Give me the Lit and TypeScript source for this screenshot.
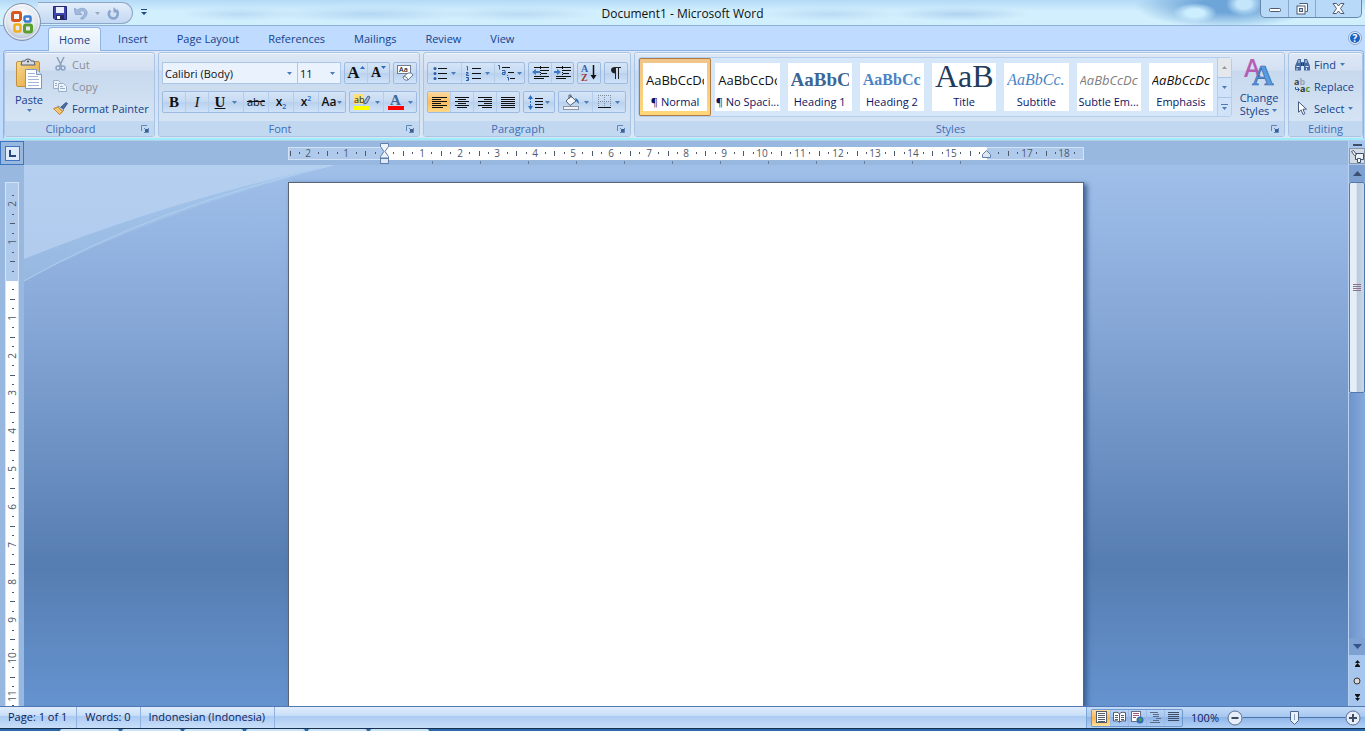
import { LitElement, html, svg, css, TemplateResult, SVGTemplateResult } from "lit";
import { customElement, property } from "lit/decorators.js";
import { classMap } from "lit/directives/class-map.js";

const icon = (w: number, h: number, body: SVGTemplateResult) =>
  html`<svg class="ic" width=${w} height=${h} viewBox="0 0 ${w} ${h}" aria-hidden="true">${body}</svg>`;

const caret = html`<svg class="ic" width="5" height="3" viewBox="0 0 5 3" aria-hidden="true"><path d="M0 0h5L2.5 3z" fill="#4a7cb8"/></svg>`;

const lines = (rows: number[][], color = "#111") =>
  svg`${rows.map(([x, y, w]) => svg`<rect x=${x} y=${y} width=${w} height="1" fill=${color}/>`)}`;

const launcherIcon = icon(8, 8, svg`<path d="M.5 6V.5H6" fill="none" stroke="#5f86b8"/><path d="M7.500 3v4.500H3" fill="none" stroke="#5f86b8"/><path d="M3 3l3 3" stroke="#5f86b8"/><rect x="4" y="4" width="3" height="3" fill="#3d5f90"/>`);

const alignRows = (offsets: number[], widths: number[]) =>
  icon(15, 13, lines(widths.map((w, i) => [offsets[i], 1 + i * 2, w])));

const icons = {
  save: icon(14, 14, svg`<path d="M.5 .5h13v13H2L.5 12z" fill="#3f45b0" stroke="#23256e"/><rect x="3" y="1" width="8" height="6" fill="#e9f0fb"/><rect x="3" y="9" width="8" height="5" fill="#26295c"/><rect x="4" y="10" width="3" height="3" fill="#fff"/>`),
  undo: icon(14, 13, svg`<path d="M0 1l1.500 6.500H8L5.500 5C8 3 10.500 3.500 10.500 6c0 2.500-2 4-4 5l1.500 1.500c3-1.500 5.500-4 5-7.500C12.500 1 7 0 3.500 3z" fill="#a3bbdc" stroke="#7f9cc6" stroke-width=".7"/>`),
  redo: icon(13, 13, svg`<path d="M3.500 3.500C0 7 2.500 11.500 6.500 11.500S12 6 9.500 3" fill="none" stroke="#8ba6cc" stroke-width="2.500"/><path d="M6.500 0v5.500H12z" fill="#8ba6cc"/>`),
  more: icon(6, 7, svg`<path d="M0 0h6v1H0zM0 3h6L3 6z" fill="#1f4a8c"/>`),
  paste: icon(28, 32, svg`<defs><linearGradient id="b" x1="0" x2="1" y2="1"><stop stop-color="#f9d98c"/><stop offset="1" stop-color="#e0a33c"/></linearGradient></defs><rect x="1.500" y="3.500" width="23" height="25" rx="1.500" fill="url(#b)" stroke="#c2913d"/><path d="M7 3h3q0-2 3-2t3 2h3l1 4H6z" fill="#d5d9e0" stroke="#555f70"/><circle cx="13" cy="3.500" r="1" fill="#444"/><path d="M10.500 11.500h11l5 5v14h-16z" fill="#fff" stroke="#7d97bd"/><path d="M21.500 11.500v5h5" fill="#d5e2f4" stroke="#7d97bd"/><path d="M13 15.500h7M13 18.500h10M13 21.500h11M13 24.500h11M13 27.500h11" stroke="#9fb6d6"/>`),
  cut: icon(11, 14, svg`<path d="M2 0l4.500 9M9 0L4.500 9" stroke="#8ea0b8" stroke-width="1.500"/><circle cx="3" cy="11" r="2" fill="none" stroke="#8aa3c5" stroke-width="1.500"/><circle cx="8" cy="11" r="2" fill="none" stroke="#8aa3c5" stroke-width="1.500"/>`),
  copy: icon(14, 12, svg`<path d="M.5 .5h5l2 2v6h-7z" fill="#eef3fa" stroke="#9aaeca"/><path d="M5.500 3.500h5l3 3v5h-8z" fill="#eef3fa" stroke="#9aaeca"/><path d="M2 3.500h2M2 5.500h2M7 6.500h3M7 8.500h5" stroke="#9aaeca"/>`),
  painter: icon(15, 13, svg`<path d="M8 5l5-4.500 1.500 1L10.500 7z" fill="#4c6da5" stroke="#2d477a" stroke-width=".8"/><path d="M5.500 4l5.500 4-1.500 1.500L4.500 5.500z" fill="#d8dde6" stroke="#66758e" stroke-width=".8"/><path d="M4.500 5L10 9.500 6.500 12.500 0.500 6.500z" fill="#f1b44a" stroke="#b9791e" stroke-width=".8"/><path d="M2.500 7l4 4M4 6l4 4" stroke="#fff0c0" stroke-width=".8"/>`),
  growTip: icon(5, 3, svg`<path d="M0 3h5L2.500 0z" fill="#2c6cc0"/>`),
  shrinkTip: icon(5, 3, svg`<path d="M0 0h5L2.500 3z" fill="#2c6cc0"/>`),
  clear: icon(17, 17, svg`<rect x=".5" y=".5" width="13" height="8" fill="#fff" stroke="#6d7c92"/><text x="2" y="7" font-size="7" font-weight="600" font-family="Open Sans, sans-serif" fill="#222">Aa</text><path d="M6 12l5-4q4-1 5 2l-5 5q-4 1-5-3z" fill="#f6f8fb" stroke="#68788f"/><path d="M6 12q1-1 3 0t2 3" fill="none" stroke="#68788f"/>`),
  highlight: icon(17, 17, svg`<rect x="0" y="0" width="10" height="10" fill="#ffdf7a"/><text x="0" y="9" font-size="9" font-family="Open Sans, sans-serif" fill="#222">ab</text><path d="M10 8l4-6 2 1-3 6-3 1z" fill="#9db4d4" stroke="#45597a" stroke-width=".9"/><rect x="0" y="12" width="16" height="4" fill="#ff0"/>`),
  fontColor: icon(16, 17, svg`<text x="2" y="11" font-size="15" font-weight="700" font-family="Liberation Serif, serif" fill="#3f6798">A</text><rect x="0" y="12" width="16" height="4" fill="#f00"/>`),
  bullets: icon(14, 14, svg`<circle cx="2" cy="2.500" r="1.500" fill="#2c5ea8"/><circle cx="2" cy="7.500" r="1.500" fill="#2c5ea8"/><circle cx="2" cy="12.500" r="1.500" fill="#2c5ea8"/>${lines([[5, 2, 9], [5, 7, 9], [5, 12, 9]])}`),
  numbering: icon(15, 15, svg`<path d="M.5 .500h1v4M0 6.500h2v1.500H.5v1.500H3M0 11.500h2.500v3H0M1 13h1.500" fill="none" stroke="#2c5ea8"/>${lines([[6, 2, 9], [6, 7, 9], [6, 12, 9]])}`),
  multilevel: icon(17, 16, svg`<path d="M0 .500h1.500v4M4 5.500h3v4H4.500V7.500h3M9.500 10v1M9 12.500h1.500v3" fill="none" stroke="#2c5ea8"/>${lines([[4, 2, 8], [10, 7, 6], [12, 13, 5]])}`),
  outdent: icon(17, 14, svg`${lines([[2, 1, 15], [9, 4, 8], [9, 7, 6], [2, 10, 15], [2, 12, 10]])}<path d="M0 6l4-3v2h4v2H4v2z" fill="#3c78c4"/><path d="M8.500 0v14" stroke="#111" stroke-dasharray="1 1"/>`),
  indent: icon(17, 14, svg`${lines([[2, 1, 15], [9, 4, 8], [9, 7, 6], [2, 10, 15], [2, 12, 10]])}<path d="M7 6L3 3v2H0v2h3v2z" fill="#3c78c4"/><path d="M8.500 0v14" stroke="#111" stroke-dasharray="1 1"/>`),
  sort: icon(16, 18, svg`<text x="0" y="8" font-size="10" font-weight="700" font-family="Liberation Serif, serif" fill="#2f66ad">A</text><text x="0" y="17" font-size="10" font-weight="700" font-family="Liberation Serif, serif" fill="#9c3b32">Z</text><path d="M12.500 1v12" stroke="#111" stroke-width="1.500"/><path d="M9.500 11h6l-3 4.500z" fill="#111"/>`),
  pilcrow: icon(11, 14, svg`<path d="M10 1H4Q0 1 0 4t4 3.500V13h1V2h2v11h1V2h2z" fill="#222"/>`),
  left: alignRows([0, 0, 0, 0, 0, 0], [15, 9, 15, 9, 15, 11]),
  center: alignRows([0, 3, 0, 3, 0, 2], [14, 8, 14, 8, 14, 10]),
  right: alignRows([0, 6, 0, 6, 0, 4], [14, 8, 14, 8, 14, 10]),
  justify: alignRows([0, 0, 0, 0, 0, 0], [14, 14, 14, 14, 14, 14]),
  spacing: icon(15, 15, svg`<path d="M0 4l2.500-4L5 4zM0 11l2.500 4L5 11z" fill="#2f6fc0"/><path d="M2.500 3v9" stroke="#2f6fc0" stroke-dasharray="2 1"/>${lines([[7, 3, 8], [7, 6, 8], [7, 9, 8], [7, 12, 8]])}`),
  shading: icon(17, 17, svg`<path d="M3 7l5-5 5 5-6 4.500z" fill="#f4f7fb" stroke="#55647a"/><path d="M6 5V1h2v3" fill="none" stroke="#55647a"/><path d="M12 4q4 1 4 6l-3-3z" fill="#3971b8"/><rect x=".5" y="12.500" width="15" height="3" fill="#f3f4f6" stroke="#8b97a8"/>`),
  borders: icon(13, 14, svg`<path d="M0 .500h13M0 6.500h13M.5 0v12M6.500 0v12M12.500 0v12" stroke="#7c8ba0" stroke-dasharray="1 1" fill="none"/><path d="M0 12.500h13" stroke="#111"/>`),
  change: icon(30, 30, svg`<text x="0" y="20" font-size="25" font-weight="600" font-family="Open Sans, sans-serif" fill="#b45fb4">A</text><text x="8" y="28" font-size="30" font-weight="700" font-family="Liberation Serif, serif" fill="#5b9be0" stroke="#2f65a8" stroke-width=".7">A</text>`),
  find: icon(15, 13, svg`<path d="M3 1h3v3h3V1h3l3 7v4.500H9V8H6v4.500H0V8z" fill="#47699f"/><path d="M4 2v3M11 2v3M1.500 8.500h3M10.500 8.500h3M2 10v2M11.500 10v2" stroke="#d5e4f7"/><path d="M6.500 5v3M8.500 5v3" stroke="#1e3a6c"/>`),
  replace: icon(16, 18, svg`<text x="0" y="8" font-size="9" font-weight="700" font-family="Open Sans, sans-serif" fill="#444">a<tspan fill="#9aa5b5">b</tspan></text><text x="6" y="15" font-size="9" font-weight="700" font-family="Open Sans, sans-serif" fill="#333">a<tspan fill="#4f9a2e">c</tspan></text><path d="M1.500 10v2.500H5M3.500 10.500l2 2-2 2" fill="none" stroke="#2c5ea8"/>`),
  select: icon(9, 14, svg`<path d="M.5 .8v10.500l2.500-2.500L5 13.500l1.800-.8L5 8.200h3.500z" fill="#fff" stroke="#43597c"/>`),
  help: icon(14, 14, svg`<circle cx="7" cy="7" r="6.500" fill="#e4effc" stroke="#8aa4c6"/><circle cx="7" cy="7" r="5" fill="#1c62c4"/><text x="4.500" y="11" font-size="10" font-weight="700" font-family="Open Sans, sans-serif" fill="#fff">?</text>`),
  print: icon(13, 13, svg`<rect x="1.500" y=".5" width="10" height="11" fill="#fff" stroke="#555d6b"/>${lines([[3, 2, 7], [3, 4, 7], [3, 6, 7], [3, 8, 7], [3, 10, 7]], "#555d6b")}`),
  reading: icon(13, 13, svg`<path d="M.5 1.500q4-1 6 1 2-2 6-1v8.500q-4-1-6 1-2-2-6-1zM6.500 2.500v9" fill="#fff" stroke="#555d6b"/>${lines([[2, 4, 3], [2, 6, 3], [2, 8, 3], [8, 4, 3], [8, 6, 3], [8, 8, 3]], "#555d6b")}`),
  web: icon(13, 13, svg`<rect x=".5" y=".5" width="9" height="10" fill="#fff" stroke="#666f80"/>${lines([[2, 2, 6], [2, 4, 6], [2, 6, 3]], "#a0567c")}<circle cx="9" cy="9" r="3.500" fill="#2f6db8"/><path d="M7 8l3-1 1 2-2 2z" fill="#4ea047"/>`),
  outline: icon(12, 13, lines([[0, 1, 8], [3, 3, 6], [3, 5, 6], [6, 7, 5], [3, 9, 6], [0, 11, 10]], "#5b6c86")),
  draft: icon(12, 13, lines([[0, 1, 11], [0, 3, 11], [0, 5, 11], [0, 7, 11], [0, 9, 11]], "#3e4d66")),
  minus: icon(16, 16, svg`<circle cx="8" cy="8" r="7" fill="#e6eefa" stroke="#5b6f8e"/><path d="M4.500 8h7" stroke="#3d4c63" stroke-width="2"/>`),
  plus: icon(16, 16, svg`<circle cx="8" cy="8" r="7" fill="#e6eefa" stroke="#5b6f8e"/><path d="M4 8h8M8 4v8" stroke="#3d4c63" stroke-width="2"/>`),
  up: icon(9, 5, svg`<path d="M0 5L4.500 0 9 5z" fill="#3c4f70"/>`),
  down: icon(9, 5, svg`<path d="M0 0h9L4.500 5z" fill="#34548c"/>`),
  pageUp: icon(7, 7, svg`<path d="M1 3l2.500-3L6 3zM1 6l2.500-3L6 6zM1 6h5v1H1z" fill="#111"/>`),
  pageDown: icon(7, 7, svg`<path d="M1 4l2.500 3L6 4zM1 1l2.500 3L6 1zM1 0h5v1H1z" fill="#111"/>`),
  browse: icon(8, 8, svg`<circle cx="4" cy="4" r="3" fill="#ddd8d4" stroke="#333"/>`),
  ruler: icon(13, 13, svg`<path d="M4.500 3.500h8v6h-8z" fill="#eef2f6" stroke="#3d536f"/><path d="M.5 1.500l2-1 3 4-2 1zM6.500 8.500h3v4h-3z" fill="#fff" stroke="#3d536f"/>`),
  min: icon(12, 6, svg`<rect x=".5" y="1.500" width="11" height="3" rx="1" fill="#fff" stroke="#4e5b70"/>`),
  restore: icon(12, 12, svg`<path d="M3.500 .5h8v8h-2" fill="#fff" stroke="#4e5b70"/><rect x="1" y="3" width="8" height="8" fill="#fff" stroke="#4e5b70"/><rect x="3.500" y="5.500" width="3" height="3" fill="#b9d5f2" stroke="#4e5b70"/>`),
  close: icon(13, 11, svg`<path d="M1 .5h3.500l2 2.500 2-2.500H12L8.500 5.500 12 10.500H8.500l-2-2.500-2 2.500H1l3.500-5z" fill="#fff" stroke="#4e5b70"/>`),
  office: icon(40, 40, svg`<defs><radialGradient id="o" cx=".5" cy=".35" r=".7"><stop stop-color="#fff"/><stop offset=".6" stop-color="#e0e6ef"/><stop offset="1" stop-color="#a4b2c8"/></radialGradient></defs><circle cx="20" cy="20" r="18.500" fill="url(#o)" stroke="#8293ad"/><circle cx="20" cy="20" r="17" fill="none" stroke="#fff" opacity=".8"/><g fill="none" stroke-width="3"><rect x="10.500" y="10.500" width="8" height="8" rx="1.500" stroke="#d9571b"/><rect x="22.500" y="14.500" width="6" height="5" rx="1" stroke="#3a7bd0" stroke-width="2.500"/><rect x="12.500" y="22.500" width="6" height="7" rx="1" stroke="#f2ad1e" stroke-width="2.500"/><rect x="22.500" y="23" width="7" height="7" rx="1.500" stroke="#5a9e2e"/></g><path d="M18 20h4M20 18v4" stroke="#e8edf4" stroke-width="2"/>`),
};

interface Item { label: string; art: TemplateResult; cls?: string; drop?: boolean; on?: boolean; }

const face = css`
  * { box-sizing: border-box; }
  button { font: inherit; color: inherit; background: none; border: 0; padding: 0; margin: 0; display: flex; align-items: center; justify-content: center; white-space: nowrap; }
  .ic { display: block; flex: none; }
`;

@customElement("ribbon-group")
class RibbonGroup extends LitElement {
  @property() name = "";
  @property({ type: Boolean }) launcher = false;
  static styles = [face, css`
    :host { display: flex; flex-direction: column; border: 1px solid #a9c4e4; border-radius: 3px; overflow: hidden; background: linear-gradient(#dee8f5 0, #d4e1f2 17px, #c8d9ee 18px, #d5e4f4 68px); box-shadow: inset 0 1px #edf4fb; }
    .body { flex: 1; padding: 0 2px 0 3px; }
    .foot { display: flex; height: 15px; align-items: center; background: #c2d8f1; color: #3e6db5; }
    .title { flex: 1; text-align: center; line-height: 15px; }
    .launch { width: 18px; height: 14px; }
  `];
  render() {
    return html`<div class="body"><slot></slot></div>
      <div class="foot"><span class="title">${this.name}</span>${this.launcher
        ? html`<button class="launch" aria-label="${this.name} options">${launcherIcon}</button>` : ""}</div>`;
  }
}

/* Pixels per centimetre at 96 dpi. */
const PITCH = 37.8;

@customElement("cm-ruler")
class CmRuler extends LitElement {
  @property({ type: Boolean, reflect: true }) vertical = false;
  static styles = css`
    :host { display: block; overflow: hidden; font-family: "Open Sans", sans-serif; font-size: 10px; }
    svg { display: block; }
    text { fill: #4d5a6e; text-anchor: middle; }
  `;
  render() {
    const v = this.vertical;
    const zero = v ? 98 : 96;
    const marks: SVGTemplateResult[] = [];
    const from = v ? -9 : -10;
    const to = v ? 110 : 73;
    for (let q = from; q <= to; q++) {
      const p = Math.round(zero + (q * PITCH) / 4);
      if (q === 0 || (!v && q === 64)) continue;
      if (q % 4 === 0) {
        const n = Math.abs(q / 4);
        marks.push(v
          ? svg`<text transform="translate(11 ${p}) rotate(-90)">${n}</text>`
          : svg`<text x=${p} y="10">${n}</text>`);
      } else {
        const len = q % 2 === 0 ? 5 : 2;
        marks.push(v
          ? svg`<rect x=${Math.round(7.5 - len / 2)} y=${p} width=${len} height="1" fill="#4d5a6e"/>`
          : svg`<rect x=${p} y=${Math.round(6 - len / 2)} width="1" height=${len} fill="#4d5a6e"/>`);
      }
    }
    return v
      ? html`<svg width="14" height="1123"><rect x=".5" y=".5" width="13" height="1122" fill="#fff" stroke="#d3e3f7"/><rect x="1" y="1" width="12" height="98" fill="#b0caec"/>${marks}</svg>`
      : html`<svg width="796" height="13"><rect x=".5" y=".5" width="795" height="12" fill="#b0caec" stroke="#d3e3f7"/><rect x="96" y="0" width="603" height="13" fill="#fff"/>${marks}</svg>`;
  }
}

@customElement("app-root")
class AppRoot extends LitElement {
  static styles = [face, css`
    :host { display: flex; flex-direction: column; height: 100vh; overflow: hidden; font-family: "Open Sans", "Noto Sans", sans-serif; font-size: 11px; color: #15428b; background: #bfdbff; }
    .titlebar { position: relative; display: flex; height: 26px; flex: none; border-bottom: 1px solid #8fb0d6; background:
      radial-gradient(ellipse 22px 10px at 1195px 13px, #cdeeff 40%, transparent),
      radial-gradient(ellipse 18px 12px at 1244px 4px, #c4e6fb 40%, transparent),
      radial-gradient(ellipse 90px 22px at 1225px 6px, #6ea5d8 30%, transparent),
      radial-gradient(ellipse 100px 8px at 370px 14px, #b4d6f3, transparent),
      radial-gradient(ellipse 60px 7px at 240px 14px, #b9daf4, transparent),
      radial-gradient(ellipse 80px 7px at 520px 14px, #b9daf4, transparent),
      radial-gradient(ellipse 70px 7px at 830px 14px, #b9daf4, transparent),
      radial-gradient(ellipse 70px 7px at 960px 14px, #b0d2f1, transparent),
      linear-gradient(#b4daf7, #d2effd 45%, #d0effd); }
    .qat { display: flex; align-items: center; gap: 7px; height: 22px; margin: 2px 0 0 38px; padding: 0 12px 0 15px; border: 1px solid #8ea6c6; border-left: 0; border-radius: 0 11px 11px 0; background: linear-gradient(#e3eefb, #c3d8f2); }
    .more { width: 22px; }
    .caption { position: absolute; left: 50%; transform: translateX(-50%); top: 5px; line-height: 17px; margin: 0; font-size: 12px; font-weight: 400; color: #111; white-space: nowrap; }
    .winctl { display: flex; margin-left: auto; margin-right: 3px; height: 18px; border: 1px solid #6987aa; border-top: 0; border-radius: 0 0 5px 5px; background: #b8daf8; overflow: hidden; }
    .winctl button { width: 27px; }
    .winctl button + button { border-left: 1px solid #8aa6c8; }
    .winctl .x { width: 46px; }
    .winctl .low { align-items: flex-end; padding-bottom: 4px; }
    .orb { position: absolute; left: 2px; top: 2px; z-index: 3; }
    .tabs { display: flex; align-items: stretch; height: 24px; flex: none; padding-left: 48px; gap: 5px; background: #bfdbff; }
    .tabs button { padding: 0 12px; }
    .tabs .on { background: linear-gradient(#f4f9fe, #e3eefa); border: 1px solid #92b4dc; border-bottom: 0; border-radius: 4px 4px 0 0; padding: 0 10px; margin: 1px 0 -1px; z-index: 1; }
    .tabs .help { margin-left: auto; padding: 0 3px 0 0; }
    .ribbon { display: flex; gap: 3px; flex: none; height: 90px; margin: 0 1px 0 3px; padding: 1px 0; border: 1px solid #8db2e3; border-bottom: 2px solid #9fecfb; border-radius: 4px; background: linear-gradient(#dfe9f5, #cfdff1 20px, #d9e7f5); }
    .clip { width: 151px; }
    .styles { flex: 1; min-width: 0; }
    .editing { width: 75px; }
    .row { display: flex; gap: 3px; }
    .rows { display: flex; flex-direction: column; gap: 7px; padding-top: 9px; }
    .set { display: flex; height: 22px; border: 1px solid #9dbbe0; border-radius: 2px; background: linear-gradient(#d6e5f7, #c4d9f2 50%, #b9d1ee 51%, #cfe2f8); }
    .set button { gap: 4px; width: 22px; }
    .set button + button { border-left: 1px solid #b4cdea; width: 23px; }
    .set button + button.tip, .set button + button.half { width: 22px; }
    .set button + button.u { width: 35px; gap: 7px; }
    .set button + button.w25 { width: 25px; }
    .set button + button.case { width: 27px; gap: 1px; }
    .set button.w33, .set button + button.w33 { width: 33px; }
    .set button.w31, .set button + button.w31 { width: 30px; gap: 2px; }
    .set .on { background: linear-gradient(#fbd9a3, #fdbc5c 50%, #fdd888); }
    .set .tip { gap: 0; }
    .set .tip .ic { margin-bottom: 11px; }
    .g { color: #111; font-family: "Liberation Serif", serif; font-size: 15px; font-weight: 700; line-height: 20px; }
    .it { font-style: italic; font-weight: 400; }
    .un { text-decoration: underline; }
    .st { font-size: 11px; font-weight: 400; font-family: "Open Sans", sans-serif; text-decoration: line-through; }
    .xs { font-family: "Open Sans", sans-serif; font-size: 12px; font-weight: 600; }
    .xs sub, .xs sup { font-size: 7px; color: #2c6cc0; line-height: 0; }
    .big { font-size: 17px; }
    .mid { font-size: 14px; }
    .combo { display: grid; align-items: center; height: 22px; background: #eaf3fd; border: 1px solid #abc7e8; }
    .combo > * { grid-area: 1 / 1; }
    .combo .ic { justify-self: end; margin-right: 5px; pointer-events: none; }
    .combo select { appearance: none; width: 100%; height: 20px; border: 0; padding: 0 2px; background: none; font: inherit; color: #111; }
    .combos { display: flex; }
    .face { width: 136px; }
    .size { width: 43px; border-left: 0; }
    .clipbody { display: flex; gap: 2px; }
    .paste { flex-direction: column; width: 42px; height: 64px; gap: 2px; }
    .list { display: flex; flex-direction: column; align-items: flex-start; }
    .list button { height: 22px; gap: 4px; }
    .list .slot { display: flex; justify-content: center; width: 16px; }
    .dim { color: #8b8e99; }
    .editlist { padding-left: 2px; }
    .stylebody { display: flex; padding-top: 4px; gap: 4px; }
    .gallery { display: flex; flex: 1; min-width: 0; height: 60px; border: 1px solid #b3cff0; border-radius: 3px; background: #d6e7fa; }
    .cards { display: flex; flex: 1; min-width: 0; }
    .card { flex: 1; min-width: 0; margin: 0; padding: 5px 4px; border-radius: 2px; display: grid; height: 58px; align-content: center; justify-content: stretch; color: #0a1464; }
    .card .in { background: #fff; height: 48px; overflow: hidden; display: grid; grid-template-rows: 30px 18px; padding: 0 3px; }
    .card.on { box-shadow: inset 0 0 0 1px #b07a45; background: linear-gradient(#f1c48a, #ffd878); z-index: 1; }
    .sample { overflow: hidden; text-align: left; line-height: 34px; height: 30px; color: #111; font-size: 13px; }
    .name { text-align: center; line-height: 18px; margin: 0 -3px; }
    .h1 { font: 700 19px/34px "Liberation Serif", serif; color: #3b6696; }
    .h2 { font: 700 16px/34px "Liberation Serif", serif; color: #4a83c4; }
    .ti { font: 400 32px/26px "Liberation Serif", serif; color: #213c5e; }
    .sub { font: italic 400 16px/34px "Liberation Serif", serif; color: #4a83c4; }
    .sem { font-style: italic; color: #808080; }
    .em { font-style: italic; }
    .scroll { display: grid; grid-template-rows: 1fr 1fr 1fr; width: 14px; flex: none; border-left: 1px solid #b3cff0; background: #cfe2f8; }
    .scroll button + button { border-top: 1px solid #a9c6ea; }
    .scroll .off { background: #e4e7ec; }
    .change { flex-direction: column; width: 46px; height: 62px; flex: none; justify-content: flex-start; line-height: 13px; gap: 4px; }
    .change .two { display: flex; align-items: center; gap: 3px; }
    .hrow { display: flex; flex: none; height: 25px; border-top: 1px solid #b5cbe8; background: #99b8e0; }
    .hcorner { width: 24px; flex: none; height: 24px; border: 1px solid #3f76c0; display: grid; place-items: center; }
    .tabsel { width: 15px; height: 15px; border: 1px solid #3f76c0; background: #dfeafa; }
    .hmid { flex: 1; display: flex; justify-content: center; padding-top: 6px; }
    .hwrap { position: relative; width: 796px; }
    .marks { position: absolute; left: 0; top: -4px; overflow: visible; }
    .side { width: 17px; flex: none; border-left: 1px solid #b9d2f0; background: #a6c6ee; display: flex; flex-direction: column; align-items: stretch; }
    .side button { flex: none; }
    .split { height: 7px; }
    .split::after { content: ""; width: 9px; height: 2px; background: #3c4f66; }
    .rtog { height: 16px; border: 1px solid #8a97a8; background: #d3dbe6; }
    .work { display: flex; flex: 1; min-height: 0; background: #99b8e0; }
    .vcol { width: 24px; flex: none; padding: 17px 5px 0; overflow: hidden; }
    .canvas { position: relative; flex: 1; display: flex; justify-content: center; padding-top: 17px; overflow: hidden; background: linear-gradient(#a0c0ea, #8bacdb 24%, #567db1 74%, #6593cf); }
    .swoosh { position: absolute; left: 0; top: 0; }
    .page { position: relative; width: 796px; flex: none; background: #fff; border: 1px solid #5b6270; border-bottom: 0; box-shadow: 3px 2px 5px #3d5f94; }
    .arrow { height: 17px; background: #7ea1d2; }
    .track { flex: 1; background: linear-gradient(90deg, #6e94ca, #84a9dc); }
    .thumb { height: 211px; border: 1px solid #5377ae; border-radius: 2px; background: linear-gradient(90deg, #e5edf7 45%, #b9cade 50%, #c8d7e8); display: grid; place-items: center; }
    .grip { width: 8px; height: 7px; background: repeating-linear-gradient(#8c7288 0 1px, transparent 1px 2px); }
    .nav { height: 17px; }
    .status { display: flex; flex: none; height: 22px; border-top: 1px solid #5079b4; color: #0b1c5c; background: linear-gradient(#e0ecfb, #c9dff8 40%, #accbf2 45%, #c8def8); }
    .status > button { border-right: 1px solid #8fb2e0; padding: 0 9px 0 8px; line-height: 19px; align-items: flex-start; }
    .tools { margin-left: auto; display: flex; align-items: center; gap: 8px; padding: 0 4px; border-left: 1px solid #7ea5d8; background: linear-gradient(#c2daf8, #a8c8f1 45%, #8fb5e8 50%, #b4d2f7); }
    .views { display: flex; height: 18px; border: 1px solid #6f97cc; border-radius: 2px; }
    .views button { width: 18px; }
    .views button + button { border-left: 1px solid #9dbde6; }
    .views .on { background: linear-gradient(#fbdba3, #fbb64e 50%, #fde29a); }
    .zoom { display: flex; align-items: center; }
    .zoom input { appearance: none; width: 102px; height: 16px; margin: 0; background: linear-gradient(#4c74aa, #4c74aa) center / 100% 1px no-repeat; }
    .zoom input::-webkit-slider-thumb { appearance: none; width: 11px; height: 14px; background: url("data:image/svg+xml,%3Csvg xmlns='http://www.w3.org/2000/svg' width='11' height='14'%3E%3Cpath d='M1.500 .5h8v9l-4 4-4-4z' fill='%23e8f0fa' stroke='%234b648c'/%3E%3Cpath d='M5.500 3v6' stroke='%238aa0c0'/%3E%3C/svg%3E"); }
    .taskbar { flex: none; height: 3px; display: flex; gap: 3px; padding-left: 60px; background: #2b69ac; border-top: 1px solid #16304f; }
    .task { width: 59px; height: 2px; border-radius: 2px 2px 0 0; background: #cbe4f8; }
  `];

  private buttonSet(items: Item[]) {
    return html`<div class="set">${items.map((i) => html`<button class=${classMap({ on: !!i.on, [i.cls || "n"]: true })} aria-label=${i.label}>${i.art}${i.drop ? caret : ""}</button>`)}</div>`;
  }

  private clipboard() {
    return html`<ribbon-group class="clip" name="Clipboard" launcher><div class="clipbody">
      <button class="paste">${icons.paste}<span>Paste</span>${caret}</button>
      <div class="list">
        <button class="dim"><span class="slot">${icons.cut}</span>Cut</button>
        <button class="dim"><span class="slot">${icons.copy}</span>Copy</button>
        <button><span class="slot">${icons.painter}</span>Format Painter</button>
      </div></div></ribbon-group>`;
  }

  private font() {
    return html`<ribbon-group name="Font" launcher><div class="rows">
      <div class="row">
        <div class="combos">
          <div class="combo face"><select aria-label="Font"><option>Calibri (Body)</option></select>${caret}</div>
          <div class="combo size"><select aria-label="Font size"><option>11</option></select>${caret}</div>
        </div>
        ${this.buttonSet([
          { label: "Grow font", cls: "tip", art: html`<span class="g big">A</span>${icons.growTip}` },
          { label: "Shrink font", cls: "tip", art: html`<span class="g mid">A</span>${icons.shrinkTip}` },
        ])}
        ${this.buttonSet([{ label: "Clear formatting", art: icons.clear }])}
      </div>
      <div class="row">
        ${this.buttonSet([
          { label: "Bold", art: html`<span class="g">B</span>` },
          { label: "Italic", art: html`<span class="g it">I</span>` },
          { label: "Underline", art: html`<span class="g un">U</span>`, cls: "u", drop: true },
          { label: "Strikethrough", art: html`<span class="g st">abc</span>`, cls: "w25" },
          { label: "Subscript", art: html`<span class="g xs">x<sub>2</sub></span>`, cls: "w25" },
          { label: "Superscript", art: html`<span class="g xs">x<sup>2</sup></span>`, cls: "w25" },
          { label: "Change case", art: html`<span class="g xs">Aa</span>`, cls: "case", drop: true },
        ])}
        ${this.buttonSet([
          { label: "Text highlight color", art: icons.highlight, cls: "w33", drop: true },
          { label: "Font color", art: icons.fontColor, cls: "w33", drop: true },
        ])}
      </div></div></ribbon-group>`;
  }

  private paragraph() {
    return html`<ribbon-group name="Paragraph" launcher><div class="rows">
      <div class="row">
        ${this.buttonSet([
          { label: "Bullets", art: icons.bullets, cls: "w33", drop: true },
          { label: "Numbering", art: icons.numbering, cls: "w33", drop: true },
          { label: "Multilevel list", art: icons.multilevel, cls: "w31", drop: true },
        ])}
        ${this.buttonSet([{ label: "Decrease indent", art: icons.outdent }, { label: "Increase indent", art: icons.indent, cls: "half" }])}
        ${this.buttonSet([{ label: "Sort", art: icons.sort }])}
        ${this.buttonSet([{ label: "Show marks", art: icons.pilcrow }])}
      </div>
      <div class="row">
        ${this.buttonSet([
          { label: "Align left", art: icons.left, on: true },
          { label: "Center", art: icons.center },
          { label: "Align right", art: icons.right },
          { label: "Justify", art: icons.justify },
        ])}
        ${this.buttonSet([{ label: "Line spacing", art: icons.spacing, cls: "w31", drop: true }])}
        ${this.buttonSet([
          { label: "Shading", art: icons.shading, cls: "w33", drop: true },
          { label: "Borders", art: icons.borders, cls: "w33", drop: true },
        ])}
      </div></div></ribbon-group>`;
  }

  private stylesGroup() {
    const cards = [
      ["AaBbCcDc", "¶ Normal", ""], ["AaBbCcDc", "¶ No Spaci...", ""], ["AaBbCc", "Heading 1", "h1"], ["AaBbCc", "Heading 2", "h2"],
      ["AaB", "Title", "ti"], ["AaBbCc.", "Subtitle", "sub"], ["AaBbCcDc", "Subtle Em...", "sem"], ["AaBbCcDc", "Emphasis", "em"],
    ];
    return html`<ribbon-group class="styles" name="Styles" launcher><div class="stylebody">
      <div class="gallery">
        <div class="cards">${cards.map(([s, n, c], i) => html`<button class="card ${i ? "" : "on"}"><span class="in"><span class="sample ${c}">${s}</span><span class="name">${n}</span></span></button>`)}</div>
        <div class="scroll">
          <button class="off" aria-label="Previous styles">${icon(5, 3, svg`<path d="M0 3h5L2.500 0z" fill="#999"/>`)}</button>
          <button aria-label="Next styles">${caret}</button>
          <button aria-label="More styles">${icon(7, 6, svg`<path d="M0 0h7v1H0zM1 3h5L3.500 6z" fill="#4a7cb8"/>`)}</button>
        </div>
      </div>
      <button class="change">${icons.change}<span>Change<span class="two">Styles ${caret}</span></span></button>
    </div></ribbon-group>`;
  }

  private editing() {
    return html`<ribbon-group class="editing" name="Editing"><div class="list editlist">
      <button><span class="slot">${icons.find}</span>Find ${caret}</button>
      <button><span class="slot">${icons.replace}</span>Replace</button>
      <button><span class="slot">${icons.select}</span>Select ${caret}</button>
    </div></ribbon-group>`;
  }

  render() {
    const stops = Array.from({ length: 12 }, (_, i) => 96 + 48 * (i + 1));
    return html`
      <header class="titlebar">
        <button class="orb" aria-label="Office menu">${icons.office}</button>
        <div class="qat">
          <button aria-label="Save">${icons.save}</button>
          <button aria-label="Undo">${icons.undo}</button>
          <button aria-label="Undo history">${icon(5, 3, svg`<path d="M0 0h5L2.500 3z" fill="#9aa9bd"/>`)}</button>
          <button aria-label="Redo">${icons.redo}</button>
        </div>
        <button class="more" aria-label="Customize toolbar">${icons.more}</button>
        <h1 class="caption">Document1 - Microsoft Word</h1>
        <div class="winctl">
          <button class="low" aria-label="Minimize">${icons.min}</button><button aria-label="Restore">${icons.restore}</button><button class="x" aria-label="Close">${icons.close}</button>
        </div>
      </header>
      <nav class="tabs">
        ${["Home", "Insert", "Page Layout", "References", "Mailings", "Review", "View"].map((t, i) => html`<button class=${i ? "" : "on"}>${t}</button>`)}
        <button class="help" aria-label="Help">${icons.help}</button>
      </nav>
      <section class="ribbon">${this.clipboard()}${this.font()}${this.paragraph()}${this.stylesGroup()}${this.editing()}</section>
      <div class="hrow">
        <div class="hcorner"><button class="tabsel" aria-label="Tab stop type">${icon(7, 7, svg`<path d="M1 0v6h6" fill="none" stroke="#24477e" stroke-width="2"/>`)}</button></div>
        <div class="hmid"><div class="hwrap"><cm-ruler></cm-ruler>
          <svg class="marks" width="796" height="22" aria-hidden="true">
            <path d="M92.500 .5h8v3l-3.500 5 3.500 5v1.500h-8v-1.500l3.500-5-3.500-5z" fill="#eef3fa" stroke="#5f7fae"/>
            <rect x="92.500" y="15.500" width="8" height="5" fill="#e0e8f2" stroke="#5f7fae"/>
            <path d="M694.500 14.500v-3l4-4 4 4v3z" fill="#dfe7ee" stroke="#5f7fae"/>
            ${stops.map((x) => svg`<rect x=${x} y="18" width="1" height="3" fill="#6d7f98"/>`)}
          </svg></div></div>
        <div class="side"><button class="split" aria-label="Split"></button><button class="rtog" aria-label="View ruler">${icons.ruler}</button></div>
      </div>
      <main class="work">
        <div class="vcol"><cm-ruler vertical></cm-ruler></div>
        <div class="canvas">
          <svg class="swoosh" width="320" height="120" aria-hidden="true">
            <path d="M0 0H310Q130 48 0 116z" fill="#b4d6ee" opacity=".25"/>
            <path d="M0 0H310Q150 34 0 94z" fill="#b9d2f2" opacity=".75"/>
            <path d="M310 0Q130 42 0 116" fill="none" stroke="#b5d3f3" opacity=".8"/>
          </svg>
          <div class="page" role="textbox" aria-label="Document" contenteditable="true"></div>
        </div>
        <div class="side">
          <button class="arrow" aria-label="Scroll up">${icons.up}</button>
          <div class="thumb"><div class="grip"></div></div>
          <div class="track"></div>
          <button class="arrow" aria-label="Scroll down">${icons.down}</button>
          <button class="nav" aria-label="Previous page">${icons.pageUp}</button>
          <button class="nav" aria-label="Browse object">${icons.browse}</button>
          <button class="nav" aria-label="Next page">${icons.pageDown}</button>
        </div>
      </main>
      <footer class="status">
        <button>Page: 1 of 1</button><button>Words: 0</button><button>Indonesian (Indonesia)</button>
        <div class="tools">
          <div class="views">${[["Print layout", icons.print], ["Reading", icons.reading], ["Web layout", icons.web], ["Outline", icons.outline], ["Draft", icons.draft]].map(([l, a], i) => html`<button class=${i ? "" : "on"} aria-label=${l}>${a}</button>`)}</div>
          <span>100%</span>
          <div class="zoom"><button aria-label="Zoom out">${icons.minus}</button><input type="range" min="10" max="190" value="100" aria-label="Zoom"><button aria-label="Zoom in">${icons.plus}</button></div>
        </div>
      </footer>
      <div class="taskbar">${[1, 2, 3, 4, 5, 6].map(() => html`<span class="task"></span>`)}</div>
    `;
  }
}
